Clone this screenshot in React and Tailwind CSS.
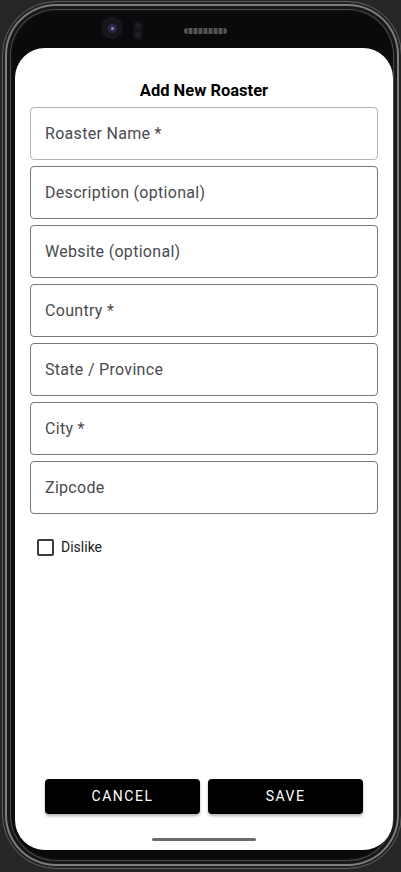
import React from "react";

const fields = [
  "Roaster Name *",
  "Description (optional)",
  "Website (optional)",
  "Country *",
  "State / Province",
  "City *",
  "Zipcode",
];

export default function App() {
  return (
    <div className="w-[401px] h-[872px] bg-[#262626] overflow-hidden pt-[1px] pl-[2px]" style={{ fontFamily: "Roboto, 'Noto Sans', sans-serif" }}>
      <div className="w-[400px] h-[868px] rounded-[54px] bg-[#0a0a0c] border border-[#5e5e5e] shadow-[inset_0_0_0_2px_#222,inset_0_0_0_4px_#7d7d7d,inset_0_0_0_7px_#18181a,inset_0_0_0_8px_#4a4a4a,inset_0_0_0_10px_#0e0e10] flex flex-col">
        <div className="relative h-[46px] shrink-0">
          <div className="absolute left-[98px] top-[15px] w-[22px] h-[22px] rounded-full bg-[#15151b] flex items-center justify-center">
            <div className="w-[9px] h-[9px] rounded-full bg-[#2a2a45] flex items-center justify-center">
              <div className="w-[3px] h-[3px] rounded-full bg-[#8a86c8]" />
            </div>
          </div>
          <div className="absolute left-[130px] top-[19px] w-[10px] h-[19px] rounded-full bg-[#141418] flex flex-col items-center justify-around py-[1px]">
            <div className="w-[6px] h-[6px] rounded-full bg-[#1f1f25]" />
            <div className="w-[6px] h-[6px] rounded-full bg-[#1f1f25]" />
          </div>
          <div className="absolute left-[181px] top-[26px] w-[43px] h-[6px] rounded-full bg-[#2a2a2e] bg-[repeating-linear-gradient(90deg,#555_0px,#555_3px,#2a2a2e_3px,#2a2a2e_5px)]" />
        </div>
        <div className="ml-[12px] w-[378px] h-[802px] rounded-[30px] bg-white flex flex-col">
          <div className="pt-[31px] text-center text-[16.5px] leading-[24px] font-bold text-black">Add New Roaster</div>
          <div className="mt-[4px] px-[15px] flex flex-col gap-[6px]">
            {fields.map((f, i) => (
              <div
                key={f}
                className={`h-[53px] rounded-[4px] border flex items-center pl-[14px] text-[16px] tracking-[0.3px] text-[#4a4a4f] ${i === 0 ? "border-[#b3b3b3]" : "border-[#79747e]"}`}
              >
                {f}
              </div>
            ))}
          </div>
          <div className="mt-[23px] ml-[22px] flex items-center gap-[7px]">
            <div className="w-[17px] h-[17px] rounded-[2px] border-2 border-[#3a3a40]" />
            <span className="text-[14px] leading-[20px] text-[#222]">Dislike</span>
          </div>
          <div className="mt-auto px-[30px] flex gap-[8px]">
            <button className="flex-1 h-[35px] rounded-[4px] bg-black text-white text-[14px] font-normal tracking-[1.5px] shadow-[0_2px_3px_rgba(0,0,0,0.3)]">CANCEL</button>
            <button className="flex-1 h-[35px] rounded-[4px] bg-black text-white text-[14px] font-normal tracking-[1.5px] shadow-[0_2px_3px_rgba(0,0,0,0.3)]">SAVE</button>
          </div>
          <div className="mt-[24px] mb-[9px] mx-auto w-[104px] h-[3px] rounded-full bg-[#6b6b6b]" />
        </div>
      </div>
    </div>
  );
}
